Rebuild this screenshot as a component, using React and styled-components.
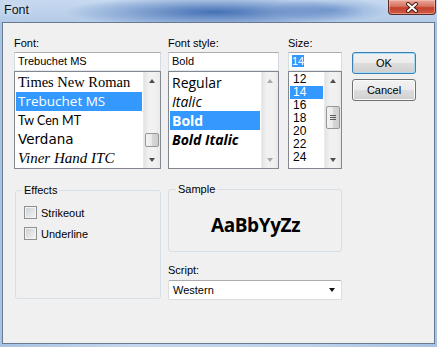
import React from 'react'
import styled, { createGlobalStyle } from 'styled-components'

const GlobalStyle = createGlobalStyle`
  html, body {
    margin: 0;
    padding: 0;
  }
  body {
    width: 437px;
    height: 347px;
    overflow: hidden;
    font-family: "Liberation Sans", Arial, sans-serif;
    font-size: 11px;
    color: #000;
  }
`

const Window = styled.div`
  width: 437px;
  height: 347px;
  display: flex;
  flex-direction: column;
  background: linear-gradient(90deg, #a9c3e4 0%, #c3d7ee 30%, #bcd2ec 70%, #a8c2e3 100%);
`

const TitleBar = styled.div`
  height: 22px;
  display: flex;
  align-items: flex-start;
  background:
    radial-gradient(ellipse 150px 16px at 215px 12px, rgba(38, 88, 168, 0.8), rgba(38, 88, 168, 0) 100%),
    radial-gradient(ellipse 60px 12px at 330px 10px, rgba(60, 110, 185, 0.45), rgba(60, 110, 185, 0) 100%),
    linear-gradient(#c6d9ef, #b4cbe8);
`

const Title = styled.div`
  padding: 3px 0 0 4px;
  font-family: "Liberation Sans", Arial, sans-serif;
  font-size: 12.5px;
  line-height: 15px;
  color: #111;
  text-shadow: 0 0 6px rgba(255, 255, 255, 0.9);
`

const CloseButton = styled.div`
  margin-left: auto;
  margin-right: 1px;
  width: 48px;
  height: 15px;
  box-sizing: border-box;
  border: 1px solid #5e2b25;
  border-top: none;
  border-radius: 0 0 4px 4px;
  background: linear-gradient(#e8a89d 0%, #d7735f 45%, #c2402c 55%, #d05a44 100%);
  box-shadow: inset 0 0 0 1px rgba(255, 210, 200, 0.45);
  display: flex;
  align-items: center;
  justify-content: center;
`

const Frame = styled.div`
  flex: 1;
  display: flex;
  padding: 0 2px 3px 2px;
`

const Client = styled.div`
  flex: 1;
  border: 1px solid #6a7a8e;
  background: #f0f0f0;
  padding: 13px 0 0 11px;
  display: flex;
  flex-direction: column;
`

const TopRow = styled.div`
  display: flex;
  align-items: flex-start;
`

const Column = styled.div`
  width: ${p => p.$w}px;
  margin-right: ${p => p.$gap || 0}px;
  display: flex;
  flex-direction: column;
`

const Label = styled.div`
  height: 14px;
  line-height: 14px;
  margin-bottom: 2px;
  font-size: 11px;
`

const TextBox = styled.div`
  height: 19px;
  box-sizing: border-box;
  border: 1px solid;
  border-color: #abadb3 #d5dbe3 #e3e9ef #d5dbe3;
  background: #fff;
  padding: 0 3px;
  line-height: 17px;
  font-size: 11px;
  white-space: nowrap;
`

const Selected = styled.span`
  background: #3399ff;
  color: #fff;
`

const ListBox = styled.div`
  height: 98px;
  box-sizing: border-box;
  border: 1px solid #828790;
  background: #fff;
  display: flex;
`

const Items = styled.div`
  flex: 1;
  min-width: 0;
  padding: ${p => p.$top}px 1px 0 1px;
  overflow: hidden;
`

const Item = styled.div`
  height: ${p => p.$h}px;
  line-height: ${p => p.$h}px;
  padding-left: ${p => p.$pad || 2}px;
  white-space: nowrap;
  overflow: hidden;
  font-family: ${p => p.$font || '"Liberation Sans", Arial, sans-serif'};
  font-size: ${p => p.$size || 12}px;
  font-style: ${p => (p.$italic ? 'italic' : 'normal')};
  font-weight: ${p => (p.$bold ? 'bold' : 'normal')};
  background: ${p => (p.$selected ? '#3399ff' : 'transparent')};
  color: ${p => (p.$selected ? '#fff' : '#000')};
`

const ScrollBar = styled.div`
  width: 17px;
  flex: none;
  background: linear-gradient(90deg, #e3e3e3, #f1f1f1 30%, #f1f1f1 70%, #e9e9e9);
  border-left: 1px solid #eaeaea;
  box-sizing: border-box;
  display: flex;
  flex-direction: column;
  align-items: center;
`

const Arrow = styled.div`
  height: 17px;
  width: 17px;
  display: flex;
  align-items: center;
  justify-content: center;
  &::after {
    content: "";
    border-left: 3.5px solid transparent;
    border-right: 3.5px solid transparent;
    ${p => (p.$down ? 'border-top' : 'border-bottom')}: 4px solid ${p => (p.$disabled ? '#a9a9a9' : '#4e4e4e')};
  }
`

const Track = styled.div`
  flex: 1;
  width: 100%;
  position: relative;
`

const Thumb = styled.div`
  position: absolute;
  left: 1px;
  right: 1px;
  top: ${p => p.$top}px;
  height: ${p => p.$h}px;
  box-sizing: border-box;
  border: 1px solid #979797;
  border-radius: 2px;
  background: linear-gradient(90deg, #f3f3f3, #e8e8e8 50%, #d6d6d6 51%, #cfcfcf);
  display: flex;
  flex-direction: column;
  align-items: center;
  justify-content: center;
  gap: 1px;
`

const Grip = styled.span`
  width: 6px;
  height: 1px;
  background: #5a5a5a;
`

const Button = styled.button`
  width: 64px;
  height: 22px;
  margin: 0 0 5px 0;
  padding: 0;
  box-sizing: border-box;
  border: 1px solid ${p => (p.$default ? '#3c7fb1' : '#707070')};
  border-radius: 3px;
  background: linear-gradient(#f2f2f2 0%, #ebebeb 50%, #dddddd 51%, #cfcfcf 100%);
  box-shadow: inset 0 0 0 1px ${p => (p.$default ? '#a6dcf5' : '#fbfbfb')};
  font-family: "Liberation Sans", Arial, sans-serif;
  font-size: 11px;
  color: #000;
`

const BottomRow = styled.div`
  display: flex;
  align-items: flex-start;
  margin-top: 13px;
`

const Group = styled.fieldset`
  margin: ${p => p.$mt || 0}px 0 0 ${p => p.$ml || 0}px;
  padding: 0 6px 0 ${p => p.$pl}px;
  width: ${p => p.$w}px;
  height: ${p => p.$h}px;
  box-sizing: border-box;
  border: 1px solid #d5dfe5;
  border-radius: 3px;
  min-width: 0;
`

const Legend = styled.legend`
  padding: 0 2px;
  font-size: 11px;
  line-height: 14px;
`

const CheckRow = styled.label`
  display: flex;
  align-items: center;
  height: 13px;
  margin: ${p => p.$mt}px 0 0 2px;
  gap: 4px;
  font-size: 11px;
`

const CheckBox = styled.span`
  width: 13px;
  height: 13px;
  box-sizing: border-box;
  border: 1px solid #8e8f8f;
  background: linear-gradient(135deg, #c9cdd2, #f6f6f6);
  box-shadow: inset 0 0 0 1px #f4f4f4;
`

const RightColumn = styled.div`
  width: 174px;
  margin-left: 7px;
  display: flex;
  flex-direction: column;
`

const SampleArea = styled.div`
  height: 55px;
  display: flex;
  align-items: center;
  justify-content: center;
  padding-top: 2px;
  box-sizing: border-box;
  font-family: "Open Sans", "Liberation Sans", sans-serif;
  font-weight: bold;
  font-size: 19px;
  letter-spacing: -0.4px;
`

const ScriptLabel = styled(Label)`
  margin: 11px 0 3px 0;
`

const Combo = styled.div`
  height: 20px;
  box-sizing: border-box;
  border: 1px solid;
  border-color: #acacac #dcdcdc #dcdcdc #dcdcdc;
  border-radius: 2px;
  background: #fff;
  display: flex;
  align-items: center;
  padding: 0 6px 0 4px;
  font-size: 11px;
  &::after {
    content: "";
    margin-left: auto;
    border-left: 3.5px solid transparent;
    border-right: 3.5px solid transparent;
    border-top: 4px solid #111;
  }
`

const fonts = [
  { name: 'Times New Roman', font: '"Liberation Serif", "Times New Roman", serif', size: 14.5 },
  { name: 'Trebuchet MS', font: '"Open Sans", sans-serif', size: 13.5, selected: true },
  { name: 'Tw Cen MT', font: 'Lato, sans-serif', size: 12.5 },
  { name: 'Verdana', font: '"DejaVu Sans", Verdana, sans-serif', size: 13.5 },
  { name: 'Viner Hand ITC', font: '"Liberation Serif", serif', size: 15, italic: true },
]

const styles = [
  { name: 'Regular' },
  { name: 'Italic', italic: true },
  { name: 'Bold', bold: true, selected: true },
  { name: 'Bold Italic', bold: true, italic: true },
]

const sizes = ['12', '14', '16', '18', '20', '22', '24']

const CloseIcon = () => (
  <svg width="14" height="11" viewBox="0 0 14 11">
    <path d="M3 2 L11 9 M11 2 L3 9" stroke="#4a1c16" strokeWidth="4" strokeLinecap="round" />
    <path d="M3 2 L11 9 M11 2 L3 9" stroke="#fff" strokeWidth="2" strokeLinecap="round" />
  </svg>
)

export default function App() {
  return (
    <>
      <GlobalStyle />
      <Window>
        <TitleBar>
          <Title>Font</Title>
          <CloseButton>
            <CloseIcon />
          </CloseButton>
        </TitleBar>
        <Frame>
          <Client>
            <TopRow>
              <Column $w={147} $gap={7}>
                <Label>Font:</Label>
                <TextBox>Trebuchet MS</TextBox>
                <ListBox>
                  <Items $top={1}>
                    {fonts.map(f => (
                      <Item
                        key={f.name}
                        $h={19}
                        $font={f.font}
                        $size={f.size}
                        $italic={f.italic}
                        $selected={f.selected}
                      >
                        {f.name}
                      </Item>
                    ))}
                  </Items>
                  <ScrollBar>
                    <Arrow />
                    <Track>
                      <Thumb $top={44} $h={14} />
                    </Track>
                    <Arrow $down />
                  </ScrollBar>
                </ListBox>
              </Column>
              <Column $w={111} $gap={9}>
                <Label>Font style:</Label>
                <TextBox>Bold</TextBox>
                <ListBox>
                  <Items $top={1}>
                    {styles.map(s => (
                      <Item
                        key={s.name}
                        $h={19}
                        $font='"Open Sans", sans-serif'
                        $size={14}
                        $italic={s.italic}
                        $bold={s.bold}
                        $selected={s.selected}
                      >
                        {s.name}
                      </Item>
                    ))}
                  </Items>
                  <ScrollBar>
                    <Arrow $disabled />
                    <Track />
                    <Arrow $down $disabled />
                  </ScrollBar>
                </ListBox>
              </Column>
              <Column $w={54} $gap={10}>
                <Label>Size:</Label>
                <TextBox>
                  <Selected>14</Selected>
                </TextBox>
                <ListBox>
                  <Items $top={1}>
                    {sizes.map(s => (
                      <Item key={s} $h={13} $size={12} $pad={3} $selected={s === '14'}>
                        {s}
                      </Item>
                    ))}
                  </Items>
                  <ScrollBar>
                    <Arrow />
                    <Track>
                      <Thumb $top={17} $h={23}>
                        <Grip />
                        <Grip />
                        <Grip />
                      </Thumb>
                    </Track>
                    <Arrow $down />
                  </ScrollBar>
                </ListBox>
              </Column>
              <Column $w={64}>
                <Label>&nbsp;</Label>
                <Button $default>OK</Button>
                <Button>Cancel</Button>
              </Column>
            </TopRow>
            <BottomRow>
              <Group $w={146} $h={116} $mt={1} $ml={1} $pl={6}>
                <Legend>Effects</Legend>
                <CheckRow $mt={9}>
                  <CheckBox />
                  Strikeout
                </CheckRow>
                <CheckRow $mt={8}>
                  <CheckBox />
                  Underline
                </CheckRow>
              </Group>
              <RightColumn>
                <Group $w={174} $h={70} $pl={7}>
                  <Legend>Sample</Legend>
                  <SampleArea>AaBbYyZz</SampleArea>
                </Group>
                <ScriptLabel>Script:</ScriptLabel>
                <Combo>Western</Combo>
              </RightColumn>
            </BottomRow>
          </Client>
        </Frame>
      </Window>
    </>
  )
}
